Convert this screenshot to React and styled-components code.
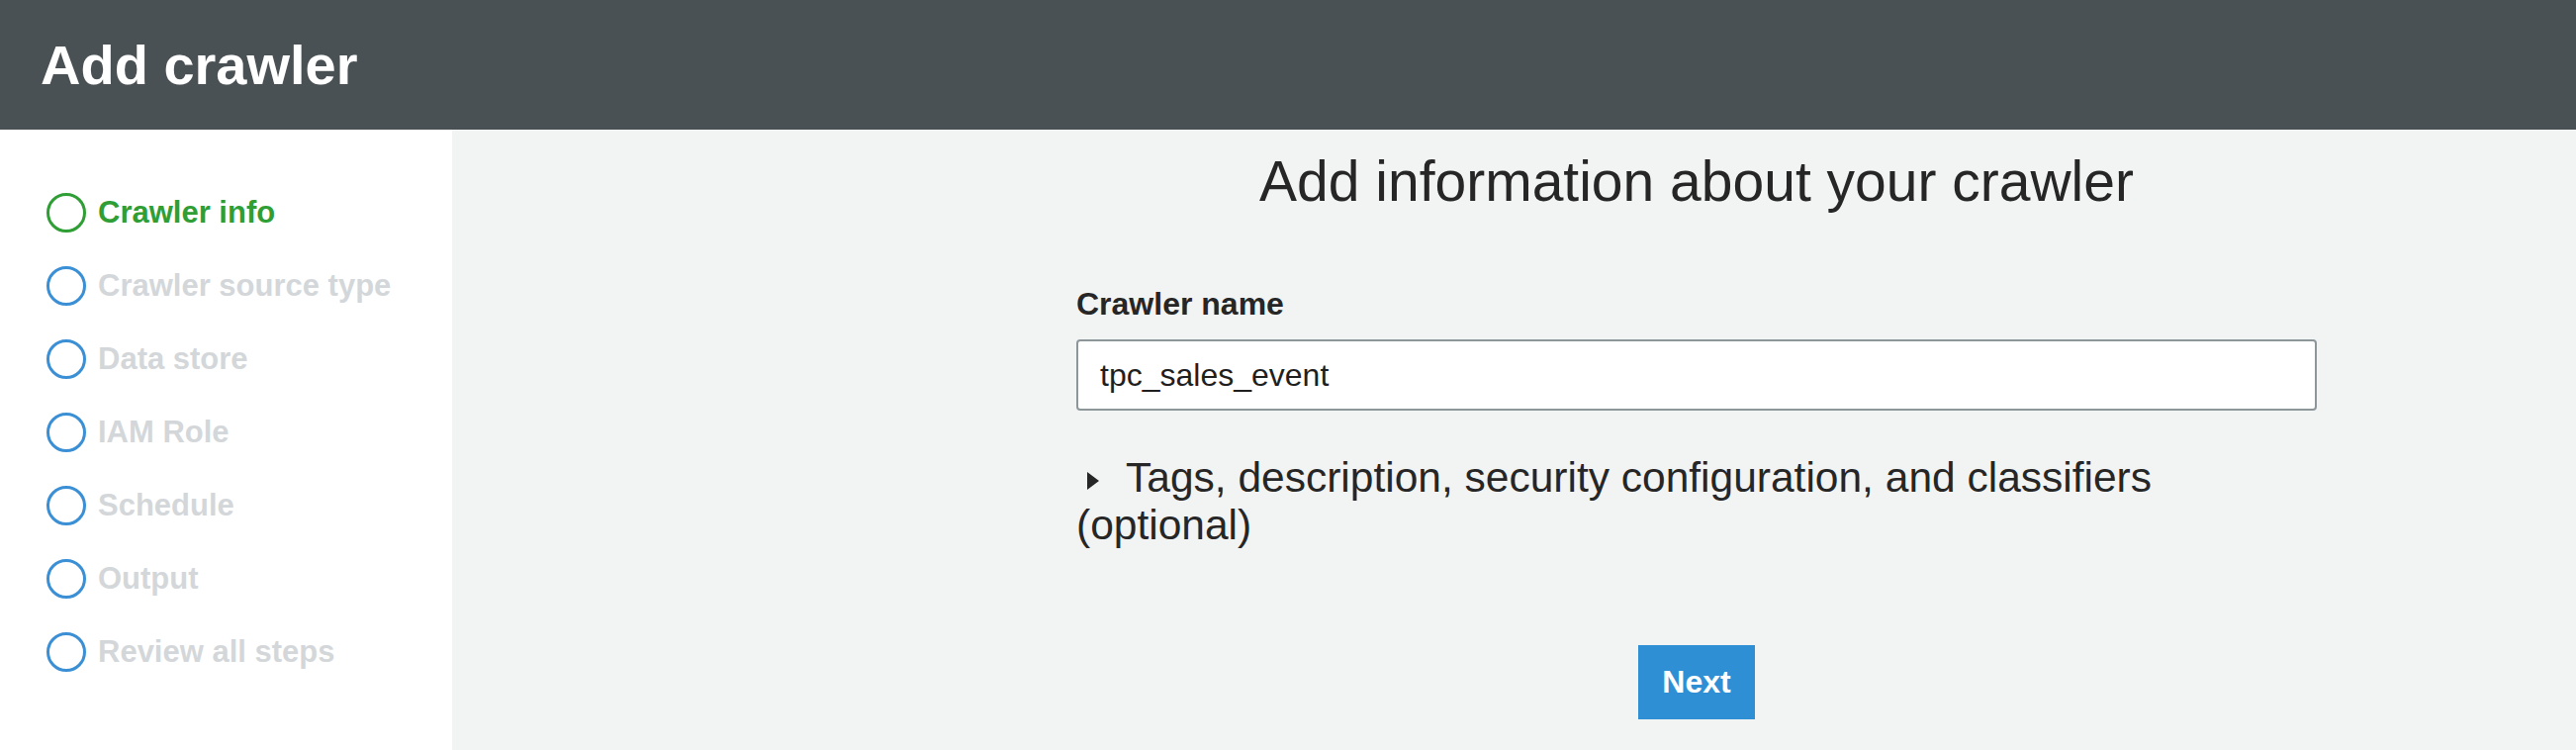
import React from 'react'
import styled, { createGlobalStyle } from 'styled-components'

const steps = [
  'Crawler info',
  'Crawler source type',
  'Data store',
  'IAM Role',
  'Schedule',
  'Output',
  'Review all steps',
]

const App = () => {
  return (
    <>
      <GlobalStyle />
      <Wrapper>
        <Header>
          <Title>Add crawler</Title>
        </Header>
        <Body>
          <Sidebar>
            {steps.map((step, i) => (
              <Step key={step}>
                <StepCircle active={i === 0} />
                <StepLabel active={i === 0}>{step}</StepLabel>
              </Step>
            ))}
          </Sidebar>
          <Main>
            <Column>
              <Heading>Add information about your crawler</Heading>
              <Label>Crawler name</Label>
              <NameInput defaultValue="tpc_sales_event" />
              <Expander>
                <Caret />
                Tags, description, security configuration, and classifiers (optional)
              </Expander>
              <Actions>
                <NextButton>Next</NextButton>
              </Actions>
            </Column>
          </Main>
        </Body>
      </Wrapper>
    </>
  )
}

export default App

const GlobalStyle = createGlobalStyle`
  html, body {
    margin: 0;
    padding: 0;
    background: #f2f3f3;
  }
  body {
    font-family: "Liberation Sans", Arial, Helvetica, sans-serif;
  }
`;

const Wrapper = styled.div`
  display: flex;
  flex-direction: column;
  width: 100%;
  height: 758px;
  overflow: hidden;
`;

const Header = styled.div`
  display: flex;
  align-items: center;
  height: 131px;
  padding-left: 41px;
  background: #4a5154;
  box-sizing: border-box;
`;

const Title = styled.h1`
  margin: 0;
  font-size: 56px;
  font-weight: 700;
  color: #ffffff;
  line-height: 64px;
`;

const Body = styled.div`
  display: flex;
  flex: 1;
`;

const Sidebar = styled.div`
  display: flex;
  flex-direction: column;
  width: 457px;
  padding-top: 47px;
  padding-left: 47px;
  background: #ffffff;
  box-sizing: border-box;
`;

const Step = styled.div`
  display: flex;
  align-items: center;
  gap: 12px;
  height: 74px;
`;

const StepCircle = styled.span`
  width: 40px;
  height: 40px;
  border-radius: 50%;
  border: 3.5px solid ${p => (p.active ? '#2f9e35' : '#3a8fd5')};
  box-sizing: border-box;
  flex-shrink: 0;
`;

const StepLabel = styled.span`
  font-size: 31px;
  font-weight: 700;
  color: ${p => (p.active ? '#2f9e35' : '#d4d7da')};
`;

const Main = styled.div`
  flex: 1;
  background: #f2f3f3;
`;

const Column = styled.div`
  display: flex;
  flex-direction: column;
  width: 1254px;
  margin-left: 631px;
  padding-top: 20px;
  color: #262626;
`;

const Heading = styled.h2`
  margin: 0;
  font-size: 57px;
  font-weight: 400;
  line-height: 64px;
  text-align: center;
  color: #262626;
`;

const Label = styled.label`
  margin-top: 74px;
  font-size: 32px;
  font-weight: 700;
  line-height: 37px;
`;

const NameInput = styled.input`
  margin-top: 17px;
  height: 72px;
  padding: 0 22px;
  border: 2px solid #8d9699;
  border-radius: 4px;
  background: #ffffff;
  font-family: "Liberation Sans", Arial, sans-serif;
  font-size: 32px;
  color: #1f1f1f;
  box-sizing: border-box;
  outline: none;
`;

const Expander = styled.div`
  max-width: 1200px;
  margin-top: 44px;
  font-size: 42.5px;
  line-height: 48px;
  color: #262626;
`;

const Caret = styled.span`
  display: inline-block;
  width: 0;
  height: 0;
  margin-left: 11px;
  margin-right: 27px;
  border-top: 9px solid transparent;
  border-bottom: 9px solid transparent;
  border-left: 12px solid #262626;
  vertical-align: middle;
`;

const Actions = styled.div`
  display: flex;
  justify-content: center;
  margin-top: 97px;
`;

const NextButton = styled.button`
  width: 118px;
  height: 75px;
  border: none;
  background: #2e8fd4;
  color: #ffffff;
  font-family: "Liberation Sans", Arial, sans-serif;
  font-size: 32px;
  font-weight: 700;
  cursor: pointer;
`;
